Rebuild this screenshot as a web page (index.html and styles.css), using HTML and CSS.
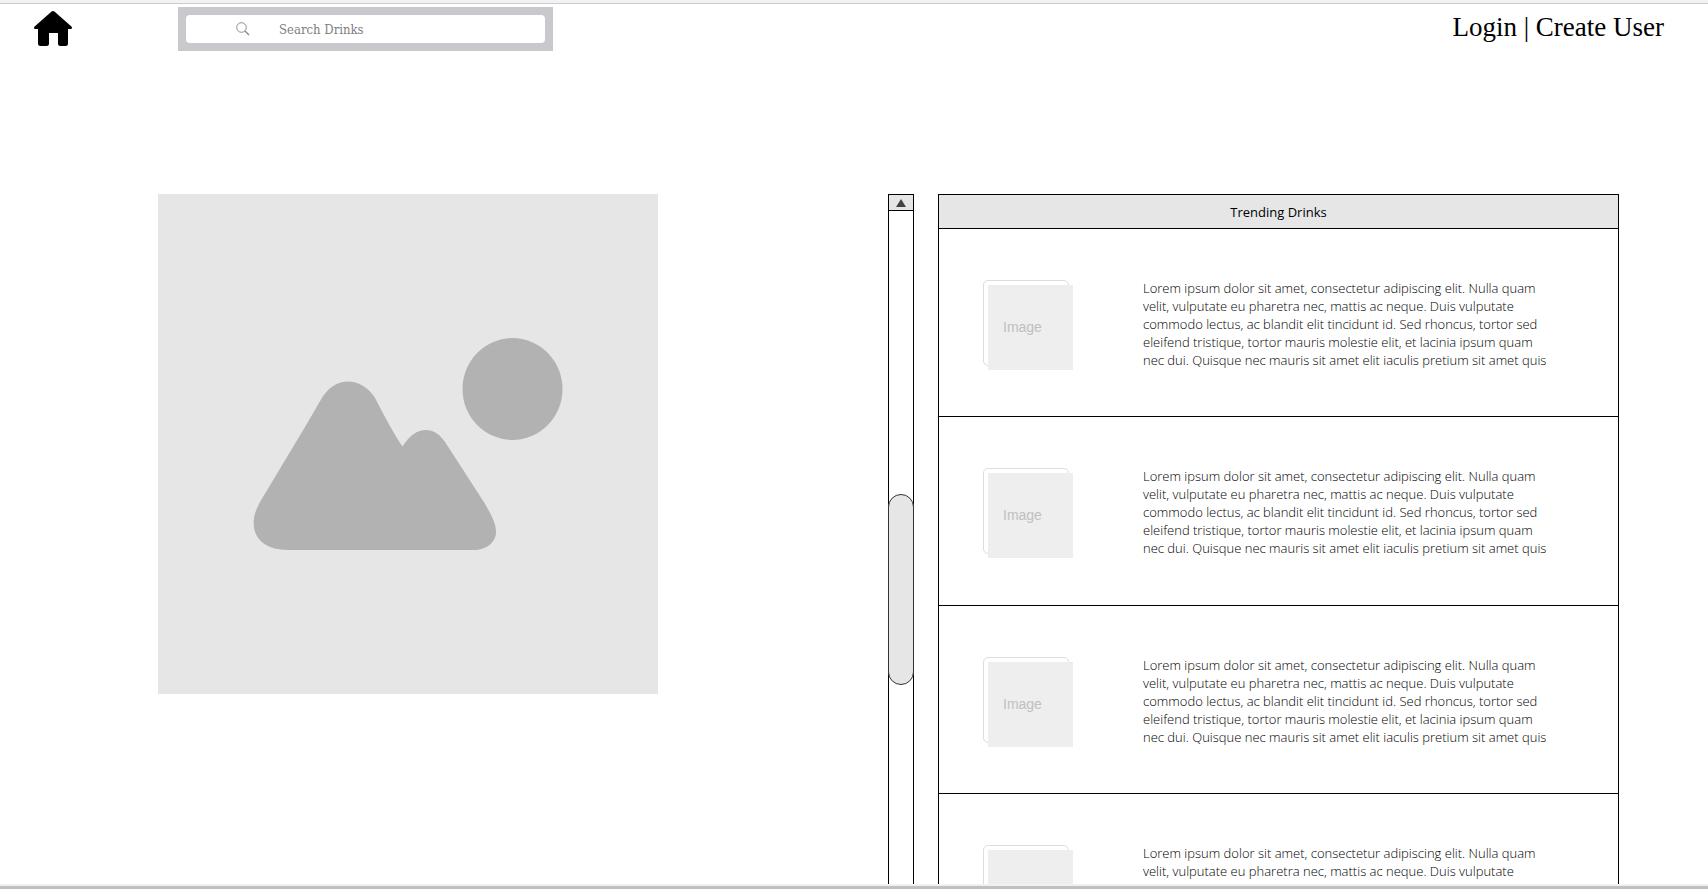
FILE: index.html
```
<!DOCTYPE html>
<html lang="en">
<head>
<meta charset="utf-8">
<title>Drinks</title>
<link rel="stylesheet" href="styles.css">
</head>
<body>
<header class="topbar">
  <a class="home" href="#" aria-label="Home">
    <svg width="38" height="36" viewBox="0 0 38 36" aria-hidden="true"><path d="M19 0Q19.700 0 20.400.600L37.400 15.600Q38.200 16.400 37.800 17.400Q37.400 18 36.500 18H34V32.500Q34 35 31.500 35H26.500Q24 35 24 32.500V22H15V32.500Q15 35 12.500 35H6.500Q4 35 4 32.500V18H1.500Q.600 18 .200 17.400Q-.200 16.400.600 15.600L17.600.600Q18.300 0 19 0Z"/></svg>
  </a>
  <form class="search" role="search">
    <label class="search-field">
      <svg width="14" height="14" viewBox="0 0 14 14" fill="none" stroke="#8c8c8c" aria-hidden="true"><circle cx="5.500" cy="5.500" r="4.800" stroke-width="1"/><path d="M9 9L13 13" stroke-width="1.500"/></svg>
      <input type="search" placeholder="Search Drinks" aria-label="Search Drinks">
    </label>
  </form>
  <nav class="account"><a href="#">Login</a> | <a href="#">Create User</a></nav>
</header>
<main class="content">
  <svg class="hero" viewBox="0 0 500 500" role="img" aria-label="Featured drink">
    <rect width="500" height="500" fill="#e6e6e6"/>
    <g fill="#b2b2b2">
      <ellipse cx="354.500" cy="195" rx="50" ry="51"/>
      <path d="M190 187.500C180 187.500 171 193 164.500 203C158 214 154 221 150 228L111 293L104 304.500C98 315 95.700 321 95.700 329C95.700 346 109 356 129.500 356H315.500C329 356 338 348 338 338C338 330 335 324 326.500 309L289 251C283 241 276 236 268 236C259 236 252 241 244.500 252.500C238 243 233 234 227 223L216.500 203C209.500 193 200 187.500 190 187.500Z"/>
    </g>
  </svg>
  <div class="scrollbar">
    <button class="scroll-up" type="button" aria-label="Scroll up"><svg width="10" height="8" viewBox="0 0 10 8" aria-hidden="true"><path d="M5 0L10 8H0Z" fill="#444"/></svg></button>
    <div class="thumb"></div>
  </div>
  <section class="trending">
    <h2>Trending Drinks</h2>
    <article class="drink">
      <div class="picture"><span>Image</span></div>
      <p>Lorem ipsum dolor sit amet, consectetur adipiscing elit. Nulla quam<br>velit, vulputate eu pharetra nec, mattis ac neque. Duis vulputate<br>commodo lectus, ac blandit elit tincidunt id. Sed rhoncus, tortor sed<br>eleifend tristique, tortor mauris molestie elit, et lacinia ipsum quam<br>nec dui. Quisque nec mauris sit amet elit iaculis pretium sit amet quis</p>
    </article>
    <article class="drink">
      <div class="picture"><span>Image</span></div>
      <p>Lorem ipsum dolor sit amet, consectetur adipiscing elit. Nulla quam<br>velit, vulputate eu pharetra nec, mattis ac neque. Duis vulputate<br>commodo lectus, ac blandit elit tincidunt id. Sed rhoncus, tortor sed<br>eleifend tristique, tortor mauris molestie elit, et lacinia ipsum quam<br>nec dui. Quisque nec mauris sit amet elit iaculis pretium sit amet quis</p>
    </article>
    <article class="drink">
      <div class="picture"><span>Image</span></div>
      <p>Lorem ipsum dolor sit amet, consectetur adipiscing elit. Nulla quam<br>velit, vulputate eu pharetra nec, mattis ac neque. Duis vulputate<br>commodo lectus, ac blandit elit tincidunt id. Sed rhoncus, tortor sed<br>eleifend tristique, tortor mauris molestie elit, et lacinia ipsum quam<br>nec dui. Quisque nec mauris sit amet elit iaculis pretium sit amet quis</p>
    </article>
    <article class="drink">
      <div class="picture"><span>Image</span></div>
      <p>Lorem ipsum dolor sit amet, consectetur adipiscing elit. Nulla quam<br>velit, vulputate eu pharetra nec, mattis ac neque. Duis vulputate<br>commodo lectus, ac blandit elit tincidunt id. Sed rhoncus, tortor sed<br>eleifend tristique, tortor mauris molestie elit, et lacinia ipsum quam<br>nec dui. Quisque nec mauris sit amet elit iaculis pretium sit amet quis</p>
    </article>
  </section>
</main>
</body>
</html>
```
FILE: styles.css
```
* { box-sizing: border-box; }

body {
  display: flex;
  flex-direction: column;
  height: 100vh;
  margin: 0;
  border-top: 3px solid #f2f2f2;
  border-bottom: 3px solid #c0c0c0;
  background: #fff;
  color: #000;
  font-family: "Open Sans", sans-serif;
}

a { color: inherit; text-decoration: none; }

.topbar {
  display: flex;
  align-items: flex-start;
  flex: none;
  padding: 3px 44px 0 34px;
  border-top: 1px solid #ccc;
}

.home { display: flex; padding-top: 4px; }

.search {
  width: 375px;
  margin-left: 106px;
  padding: 8px;
  background: #c9c8cd;
}

.search-field {
  display: flex;
  align-items: center;
  gap: 29px;
  height: 28px;
  padding-left: 50px;
  border-radius: 4px;
  background: #fff;
}

.search-field input {
  flex: 1;
  min-width: 0;
  padding: 0;
  border: 0;
  outline: 0;
  background: none;
  font: 13px "DejaVu Serif Condensed", "DejaVu Serif", serif;
}

.search-field input::placeholder { color: #808080; opacity: 1; }

.account {
  margin-left: auto;
  font: 27px/40px "Liberation Serif", serif;
}

.content {
  display: grid;
  grid-template-columns: minmax(0, 500fr) 256px minmax(0, 705fr);
  flex: 1;
  min-height: 0;
  padding: 143px 89px 0 158px;
  border-bottom: 2px solid #f0f0f0;
  overflow: hidden;
}

.hero { display: block; width: 100%; }

.scrollbar {
  margin-left: 230px;
  border: 1px solid #000;
  border-bottom: 0;
}

.scroll-up {
  display: flex;
  align-items: center;
  justify-content: center;
  width: 100%;
  height: 16px;
  padding: 0;
  border: 0;
  border-bottom: 1px solid #000;
  background: #e6e6e6;
}

.thumb {
  height: 191px;
  margin: 283px -1px 0;
  border: 1px solid #333;
  border-radius: 13px;
  background: #e6e6e6;
}

.trending {
  display: grid;
  grid-template-rows: 33px 188px 189px 188px 188px;
  margin-left: 24px;
  border: 1px solid #000;
  border-bottom: 0;
}

.trending h2 {
  margin: 0;
  background: #e6e6e6;
  font-size: 13px;
  font-weight: 500;
  line-height: 34px;
  text-align: center;
}

.drink {
  display: flex;
  align-items: flex-start;
  gap: 74px;
  padding: 51px 0 0 44px;
  border-top: 1px solid #000;
}

.picture {
  flex: none;
  width: 86px;
  height: 86px;
  padding: 4px 0 0 4px;
  border: 1px solid #ddd;
  border-radius: 5px;
}

.picture span {
  display: block;
  width: 85px;
  height: 85px;
  padding-left: 15px;
  background: #eee;
  color: #c0c0c0;
  font: 14px/85px "Liberation Sans", sans-serif;
}

.drink p {
  margin: -1px 0 0;
  color: #000;
  font-size: 13px;
  font-weight: 300;
  line-height: 18px;
  white-space: nowrap;
}
```
